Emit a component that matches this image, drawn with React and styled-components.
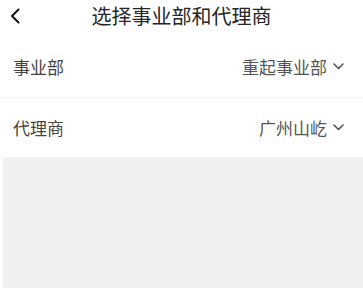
import React from "react";
import styled, { createGlobalStyle } from "styled-components";

const Global = createGlobalStyle`
  html, body { margin: 0; padding: 0; background: #fff; }
  body { font-family: "Noto Sans CJK SC", "Noto Sans", sans-serif; }
  * { box-sizing: border-box; }
`;

const Page = styled.div`
  width: 363px;
  height: 288px;
  display: flex;
  flex-direction: column;
  background: #fff;
  overflow: hidden;
`;

const Header = styled.div`
  height: 38px;
  display: flex;
  align-items: center;
  justify-content: center;
  position: relative;
  flex-shrink: 0;
`;

const BackButton = styled.div`
  position: absolute;
  left: 8px;
  top: 7px;
  width: 14px;
  height: 18px;
  display: flex;
  align-items: center;
  justify-content: center;
`;

const Title = styled.div`
  font-size: 20px;
  color: #262626;
  line-height: 1;
  margin-top: -6px;
`;

const Row = styled.div`
  height: 60px;
  display: flex;
  align-items: center;
  justify-content: space-between;
  padding: 0 19px 0 13px;
  border-bottom: 1px solid #f1f1f1;
  flex-shrink: 0;
`;

const Label = styled.div`
  font-size: 17px;
  color: #444;
  margin-top: ${(p) => p.$offset || 0}px;
`;

const Value = styled.div`
  display: flex;
  align-items: center;
  gap: 6px;
  font-size: 17px;
  color: #555;
  margin-top: ${(p) => p.$offset || 0}px;
`;

const Filler = styled.div`
  flex: 1;
  background: #f0f0f0;
  margin-left: 3px;
`;

const Chevron = () => (
  <svg width="11" height="7" viewBox="0 0 11 7">
    <path d="M1 1 L5.5 5.5 L10 1" fill="none" stroke="#555" strokeWidth="1.6" strokeLinecap="round" strokeLinejoin="round" />
  </svg>
);

const Back = () => (
  <svg width="10" height="16" viewBox="0 0 10 16">
    <path d="M8.5 1.5 L2 8 L8.5 14.5" fill="none" stroke="#111" strokeWidth="2" strokeLinecap="round" strokeLinejoin="round" />
  </svg>
);

export default function App() {
  return (
    <>
      <Global />
      <Page>
        <Header>
          <BackButton><Back /></BackButton>
          <Title>选择事业部和代理商</Title>
        </Header>
        <Row>
          <Label $offset={-2}>事业部</Label>
          <Value $offset={-2}>重起事业部<Chevron /></Value>
        </Row>
        <Row>
          <Label>代理商</Label>
          <Value>广州山屹<Chevron /></Value>
        </Row>
        <Filler />
      </Page>
    </>
  );
}
